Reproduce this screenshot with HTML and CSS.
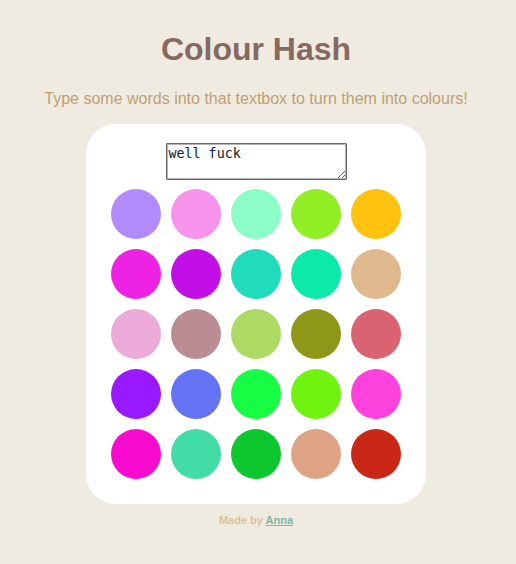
FILE: index.html
```html
<!DOCTYPE html>
<html>
<head>
<meta charset="utf-8">
<link rel="stylesheet" href="styles.css">
</head>
<body>
<h1 class="title">Colour Hash</h1>
<p class="subtitle">Type some words into that textbox to turn them into colours!</p>
<div class="card">
  <textarea class="input">well fuck</textarea>
  <div class="grid">
    <span class="dot" style="background:#b18bfc"></span>
    <span class="dot" style="background:#f893ec"></span>
    <span class="dot" style="background:#8cfdc7"></span>
    <span class="dot" style="background:#92ee24"></span>
    <span class="dot" style="background:#ffc20e"></span>
    <span class="dot" style="background:#ee22e2"></span>
    <span class="dot" style="background:#c20fe8"></span>
    <span class="dot" style="background:#20dcbc"></span>
    <span class="dot" style="background:#0ceaa9"></span>
    <span class="dot" style="background:#dfb98d"></span>
    <span class="dot" style="background:#ecaad8"></span>
    <span class="dot" style="background:#bc8c94"></span>
    <span class="dot" style="background:#acda62"></span>
    <span class="dot" style="background:#8f9718"></span>
    <span class="dot" style="background:#d96370"></span>
    <span class="dot" style="background:#9a18fe"></span>
    <span class="dot" style="background:#6472f4"></span>
    <span class="dot" style="background:#17fd43"></span>
    <span class="dot" style="background:#6ff30f"></span>
    <span class="dot" style="background:#fe42de"></span>
    <span class="dot" style="background:#f70ccf"></span>
    <span class="dot" style="background:#42dca6"></span>
    <span class="dot" style="background:#0cc72e"></span>
    <span class="dot" style="background:#dda384"></span>
    <span class="dot" style="background:#c92816"></span>
  </div>
</div>
<p class="footer">Made by <a class="author" href="#">Anna</a></p>
</body>
</html>
```
FILE: styles.css
```css
html, body {
  margin: 0;
  padding: 0;
}
body {
  background: #f0ebe1;
  font-family: "Liberation Sans", Arial, sans-serif;
  display: flex;
  flex-direction: column;
  align-items: center;
  padding: 8px 4px 0 0;
}
.title {
  margin: 23px 0 0;
  font-size: 32px;
  font-weight: bold;
  color: #86695f;
  line-height: 37px;
}
.subtitle {
  margin: 22px 0 0;
  font-size: 16px;
  color: #bf9f74;
  line-height: 18px;
}
.card {
  margin-top: 16px;
  width: 340px;
  box-sizing: border-box;
  background: #ffffff;
  border-radius: 30px;
  padding: 19px 25px 25px;
  display: flex;
  flex-direction: column;
  align-items: center;
  gap: 9px;
}
.input {
  width: 181px;
  height: 37px;
  box-sizing: border-box;
  margin: 0;
  padding: 2px;
  border: 1px solid #666666;
  box-shadow: inset 0 0 0 1px #b4b4b4;
  border-radius: 1px;
  font-family: "DejaVu Sans Mono", monospace;
  font-size: 13.33px;
  line-height: 15px;
  color: #101828;
  resize: vertical;
  display: block;
}
.grid {
  display: grid;
  grid-template-columns: repeat(5, 50px);
  gap: 10px;
}
.dot {
  width: 50px;
  height: 50px;
  border-radius: 50%;
  display: block;
}
.footer {
  margin: 10px 0 0;
  font-size: 11px;
  font-weight: bold;
  color: #d6c39e;
  line-height: 13px;
}
.author {
  color: #7fb5a8;
}
```
